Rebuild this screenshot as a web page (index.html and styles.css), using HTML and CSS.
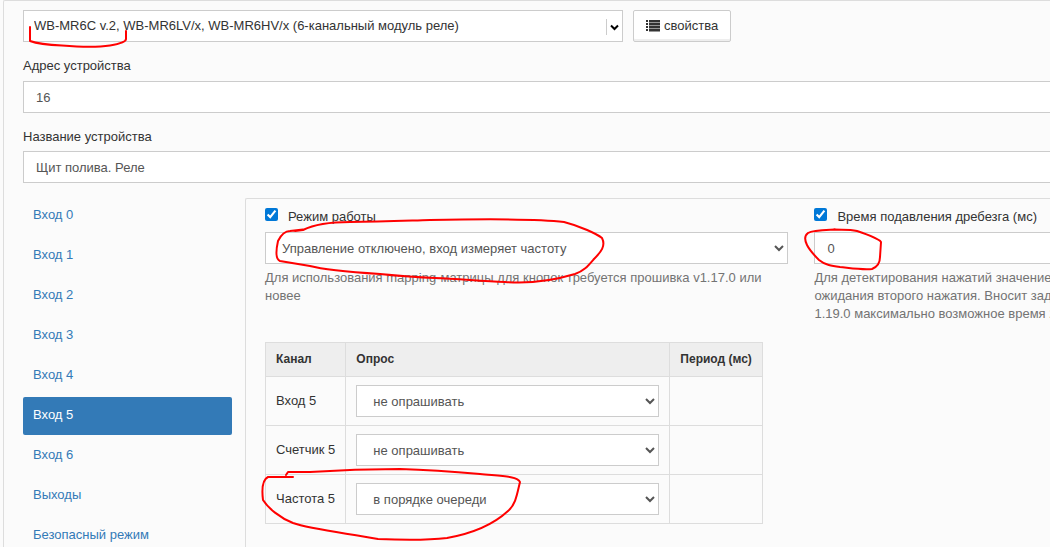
FILE: index.html
```html
<!DOCTYPE html>
<html lang="ru">

<head>
  <meta charset="UTF-8">
  <meta name="viewport" content="width=device-width, initial-scale=1.0">
  <title>WB-MR6C v.2</title>
  <link rel="stylesheet" href="styles.css">
</head>

<body>
  <main class="device">
    <div class="device-type">
      <select class="control type-select" aria-label="WB-MR6C v.2">
        <option>WB-MR6C v.2, WB-MR6LV/x, WB-MR6HV/x (6-канальный модуль реле)</option>
      </select>
      <button type="button" class="btn">
        <svg class="icon-list" width="14" height="12" viewBox="0 0 14 12" aria-hidden="true">
          <path d="M0 0h2v2H0zM0 3h2v2H0zM0 6h2v2H0zM0 9h2v2H0zM3 0h11v2.500H3zM3 3h11v2.500H3zM3 6h11v2.500H3zM3 9h11v2.500H3z" />
        </svg>
        свойства
      </button>
    </div>

    <div class="form-group">
      <label for="address">Адрес устройства</label>
      <input class="control bleed" type="text" id="address" value="16">
    </div>
    <div class="form-group">
      <label for="deviceName">Название устройства</label>
      <input class="control bleed" type="text" id="deviceName" value="Щит полива. Реле">
    </div>

    <div class="tabs">
      <nav class="tab-list">
        <a href="#in0">Вход 0</a>
        <a href="#in1">Вход 1</a>
        <a href="#in2">Вход 2</a>
        <a href="#in3">Вход 3</a>
        <a href="#in4">Вход 4</a>
        <a href="#in5" class="active">Вход 5</a>
        <a href="#in6">Вход 6</a>
        <a href="#outputs">Выходы</a>
        <a href="#safe">Безопасный режим</a>
      </nav>

      <section class="tab-content">
        <div class="params">
          <div class="param">
            <div class="param-title">
              <input type="checkbox" id="modeOn" checked>
              <label for="modeOn">Режим работы</label>
            </div>
            <select class="control" aria-label="Режим работы">
              <option>Управление отключено, вход измеряет частоту</option>
            </select>
            <p class="help">Для использования mapping-матрицы для кнопок требуется прошивка v1.17.0 или новее</p>
          </div>
          <div class="param">
            <div class="param-title">
              <input type="checkbox" id="debounceOn" checked>
              <label for="debounceOn">Время подавления дребезга (мс)</label>
            </div>
            <input class="control bleed" type="text" aria-label="Время подавления дребезга (мс)" value="0">
            <p class="help help-long">Для детектирования нажатий значение<br>ожидания второго нажатия. Вносит зад<br>1.19.0 максимально возможное время 2</p>
          </div>
        </div>

        <table class="channels">
          <thead>
            <tr>
              <th>Канал</th>
              <th>Опрос</th>
              <th>Период (мс)</th>
            </tr>
          </thead>
          <tbody>
            <tr>
              <td><label for="poll1">Вход 5</label></td>
              <td><select class="control poll" id="poll1"><option>не опрашивать</option></select></td>
              <td></td>
            </tr>
            <tr>
              <td><label for="poll2">Счетчик 5</label></td>
              <td><select class="control poll" id="poll2"><option>не опрашивать</option></select></td>
              <td></td>
            </tr>
            <tr>
              <td><label for="poll3">Частота 5</label></td>
              <td><select class="control poll" id="poll3"><option>в порядке очереди</option></select></td>
              <td></td>
            </tr>
          </tbody>
        </table>
      </section>
    </div>
  </main>

  <!-- Hand-drawn marks over the important fields -->
  <svg class="marks" width="1050" height="547" viewBox="0 0 1050 547" aria-hidden="true">
    <path d="M30 27L30 41C38 44 50 45 62 45.500C80 47 100 47 110 45.500C119 44 126 42 126 39L126 31" />
    <path d="M295 231L303 230C315 224 330 222 350 222C380 222 400 221 430 220C480 219 540 219 564 222C580 226 597 234 602 238C606 246 601 252 594 259C588 266 584 271 575 274C555 280 530 284 505 282C480 281 460 279 435 278C410 277 400 276 380 274C350 272 325 270 310 266L280 261C275 259 276 250 278 241C281 235 284 231 290 231L303 229.500" />
    <path d="M835 229.500C825 230 813 230 808 233C804 236 805 241 807 245C810 251 815 256 819 260C825 265 832 266 840 267C850 268 862 270 872 269C877 267 880 264 880 257L881 242C879 239 866 234 857 231C849 229 842 230 834 229.500" />
    <path d="M293 477L268 477C262 480 262 492 263 500C268 508 280 518 293 523C310 529 345 533 378 539C400 540 430 540 447 538C475 533 495 523 508 511C516 504 517 494 520 482C518 476 500 476 480 474C445 471 430 470 400 469C370 469 340 470 310 472L288 472L286 475" />
  </svg>
</body>

</html>
```
FILE: styles.css
```css
* {
  box-sizing: border-box;
}

body {
  margin: 0;
  background: #fbfbfb;
  color: #333;
  font-family: "Liberation Sans", Arial, sans-serif;
  font-size: 13px;
  line-height: 18px;
  position: relative;
  overflow: hidden;
}

.device {
  margin-left: 3px;
  padding: 9px 0 0 19px;
  min-height: 100vh;
  border: 1px solid #ddd;
  border-right: 0;
  border-bottom: 0;
  border-radius: 2px 0 0 0;
}

.device-type {
  display: flex;
  gap: 10px;
  margin-bottom: 15px;
}

.control {
  display: block;
  width: 100%;
  height: 32px;
  padding: 6px 12px;
  border: 1px solid #ccc;
  border-radius: 0;
  background: #fff;
  color: #555;
  font: inherit;
}

/* fields that run up to the window edge */
.bleed {
  border-right: 0;
}

.type-select {
  width: 600px;
  padding: 0 10px;
  color: #333;
  appearance: none;
  background: #fff url("data:image/svg+xml,%3Csvg xmlns='http://www.w3.org/2000/svg' width='14' height='16'%3E%3Cpath d='M.5 0v16' stroke='%23ccc'/%3E%3Cpath d='M5 6.500l3.500 3.500 3.500-3.500' fill='none' stroke='%23000' stroke-width='2'/%3E%3C/svg%3E") no-repeat right 2px top 8px;
}

.btn {
  display: flex;
  align-items: center;
  gap: 4px;
  height: 32px;
  padding: 0 12px;
  border: 1px solid #ccc;
  border-radius: 2px;
  background: #fff;
  box-shadow: inset 0 -2px 0 #eee;
  color: #333;
  font: inherit;
}

.icon-list {
  fill: #333;
}

.form-group {
  margin-bottom: 15px;
}

.form-group label {
  display: block;
  margin-bottom: 5px;
}

.device-type + .form-group label {
  margin-bottom: 6px;
}

.tabs {
  display: flex;
  gap: 13px;
}

.tab-list {
  display: flex;
  flex-direction: column;
  gap: 2px;
  flex: 0 0 209px;
  margin-top: -1px;
}

.tab-list a {
  padding: 9px 10px 11px;
  border-radius: 2px;
  color: #337ab7;
  text-decoration: none;
}

.tab-list .active {
  background: #337ab7;
  color: #fff;
}

.tab-content {
  flex: 1;
  min-width: 0;
  padding: 9px 0 0 19px;
  border: 1px solid #ddd;
  border-right: 0;
  border-radius: 2px 0 0 0;
}

.params {
  display: grid;
  grid-template-columns: 20fr 9fr;
  gap: 26px;
}

.param {
  min-width: 0;
}

.param-title {
  display: flex;
  align-items: flex-start;
  gap: 10px;
  margin-bottom: 6px;
  white-space: nowrap;
}

.param-title input {
  width: 13px;
  height: 13px;
  margin: 0;
  accent-color: #0078d7;
}

.help {
  margin: 5px 0 19px;
  color: #737373;
}

.help-long {
  overflow: hidden;
  white-space: nowrap;
}

.channels {
  border-collapse: collapse;
}

.channels th,
.channels td {
  padding: 8px 10px;
  border: 1px solid #ddd;
  text-align: left;
}

.channels th {
  background: #eee;
  font-size: 12px;
  line-height: 17px;
}

.channels label {
  white-space: nowrap;
}

.poll {
  width: 303px;
}

.marks {
  position: absolute;
  top: 0;
  left: 0;
  pointer-events: none;
  fill: none;
  stroke: #f00;
  stroke-width: 2;
  stroke-linecap: round;
  stroke-linejoin: round;
}
```
